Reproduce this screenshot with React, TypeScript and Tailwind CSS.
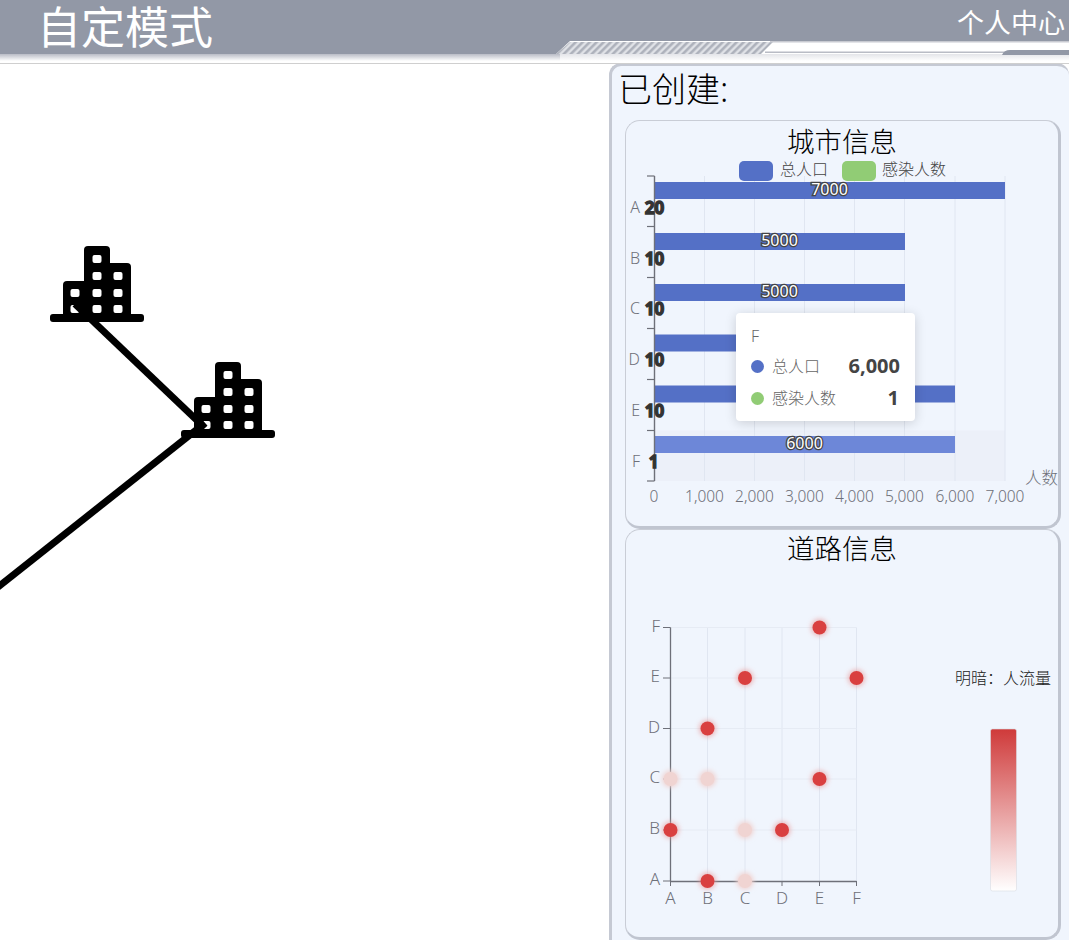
import React from "react";

const FONT = `"Noto Sans", "Noto Sans CJK SC", sans-serif`;
const GRID = [704.5, 754.5, 804.5, 854.5, 904.5, 955, 1005];
const TICKS = [176, 226.5, 277.5, 328.5, 379.5, 430.5, 481];
const BARS = [
  { name: "A", y: 182, w: 350, v: "7000", n: "20", ly: 208, show: true },
  { name: "B", y: 233, w: 250, v: "5000", n: "10", ly: 259, show: true },
  { name: "C", y: 284, w: 250, v: "5000", n: "10", ly: 309, show: true },
  { name: "D", y: 334.5, w: 250, v: "5000", n: "10", ly: 360, show: false },
  { name: "E", y: 385.5, w: 300, v: "6000", n: "10", ly: 411, show: false },
  { name: "F", y: 436, w: 300, v: "6000", n: "1", ly: 462, show: true },
];
const XLAB = ["1,000", "2,000", "3,000", "4,000", "5,000", "6,000", "7,000"];

const SX = [670.5, 707.5, 745, 782, 819.5, 856.5];
const SY = [880, 829, 778, 727.5, 677, 626.5];
const NAMES = ["A", "B", "C", "D", "E", "F"];
const POINTS: [number, number, boolean][] = [
  [4, 5, true], [2, 4, true], [5, 4, true], [1, 3, true], [4, 2, true],
  [0, 1, true], [3, 1, true], [1, 0, true],
  [0, 2, false], [1, 2, false], [2, 1, false], [2, 0, false],
];

function City({ x, y }: { x: number; y: number }) {
  const cols = [75, 97, 118];
  const wins: [number, number][] = [
    [1, 259], [1, 276], [2, 276], [0, 293], [1, 293], [2, 293], [0, 309], [1, 309], [2, 309],
  ];
  return (
    <g transform={`translate(${x} ${y})`}>
      <rect x="84" y="246" width="26" height="72" rx="4" fill="#000" />
      <rect x="100" y="263" width="31" height="55" rx="4" fill="#000" />
      <rect x="63" y="281" width="30" height="37" rx="4" fill="#000" />
      <rect x="50" y="314" width="94" height="8" rx="3" fill="#000" />
      {wins.map(([c, wy], i) => (
        <rect key={i} x={cols[c] - 4.5} y={wy - 4} width="9" height="8" rx="2" fill="#fff" />
      ))}
    </g>
  );
}

function BarChart() {
  return (
    <svg viewBox="626 158 432 368" className="block w-[432px] h-[368px] overflow-visible" fontFamily={FONT}>
      <rect x="655" y="430.5" width="350" height="50.5" fill="#ecf0f9" />
      {GRID.map((x) => (
        <line key={x} x1={x} x2={x} y1="176" y2="481" stroke="#e0e6f1" strokeWidth="1" />
      ))}
      <rect x="739" y="161" width="34" height="20" rx="5" fill="#5470c6" />
      <text x="780" y="175" fontSize="16" fontWeight="300" fill="#444">总人口</text>
      <rect x="842" y="161" width="34" height="20" rx="5" fill="#91cc75" />
      <text x="882" y="175" fontSize="16" fontWeight="300" fill="#444">感染人数</text>
      {BARS.map((b) => (
        <g key={b.name}>
          <rect x="655" y={b.y} width={b.w} height="17" fill={b.name === "F" ? "#6d87d8" : "#5470c6"} />
          {b.show && (
            <text
              x={654.5 + b.w / 2}
              y={b.y + 13}
              fontSize="16"
              textAnchor="middle"
              fill="#fff"
              stroke="#444"
              strokeWidth="2.6"
              paintOrder="stroke"
            >
              {b.v}
            </text>
          )}
          <text x="640" y={b.ly + 5} fontSize="16" fontWeight="300" textAnchor="end" fill="#6e7079">{b.name}</text>
        </g>
      ))}
      <line x1="654.5" x2="654.5" y1="176" y2="481" stroke="#6e7079" strokeWidth="1.4" />
      {TICKS.map((y) => (
        <line key={y} x1="647" x2="654.5" y1={y} y2={y} stroke="#6e7079" strokeWidth="1.2" />
      ))}
      {BARS.map((b) => (
        <text
          key={b.name}
          x={b.name === "F" ? 653.5 : 654.5}
          y={b.ly + 6}
          fontSize="17"
          fontWeight="700"
          textAnchor="middle"
          fill="#333"
          stroke="#333"
          strokeWidth="1.3"
        >
          {b.n}
        </text>
      ))}
      <text x="654" y="502" fontSize="15.5" fontWeight="300" textAnchor="middle" fill="#6e7079">0</text>
      {XLAB.map((t, i) => (
        <text key={t} x={GRID[i]} y="502" fontSize="15.5" fontWeight="300" textAnchor="middle" fill="#6e7079">{t}</text>
      ))}
      <text x="1025" y="484" fontSize="16.5" fontWeight="300" fill="#6e7079">人数</text>
    </svg>
  );
}

function Tooltip() {
  return (
    <div className="absolute left-[110px] top-[192px] w-[179px] h-[108px] rounded bg-white shadow-[0_2px_12px_rgba(0,0,0,0.16)] px-[15px] pt-[12px] text-[16px] font-light text-[#666]">
      <div className="leading-[22px]">F</div>
      <div className="flex items-center mt-[8px] h-[22px]">
        <span className="w-[13px] h-[13px] rounded-full bg-[#5470c6] mr-[8px]" />
        <span>总人口</span>
        <span className="ml-auto text-[#444] font-bold text-[20px]">6,000</span>
      </div>
      <div className="flex items-center mt-[10px] h-[22px]">
        <span className="w-[13px] h-[13px] rounded-full bg-[#91cc75] mr-[8px]" />
        <span>感染人数</span>
        <span className="ml-auto mr-px text-[#444] font-bold text-[20px]">1</span>
      </div>
    </div>
  );
}

function Scatter() {
  return (
    <svg viewBox="626 566 432 368" className="block w-[432px] h-[368px] overflow-visible" fontFamily={FONT}>
      <defs>
        <filter id="glow" x="-100%" y="-100%" width="300%" height="300%">
          <feGaussianBlur stdDeviation="2.5" />
        </filter>
        <linearGradient id="vm" x1="0" y1="0" x2="0" y2="1">
          <stop offset="0" stopColor="#cf3a3a" />
          <stop offset="1" stopColor="#ffffff" />
        </linearGradient>
      </defs>
      {SX.slice(1).map((x) => (
        <line key={x} x1={x} x2={x} y1="626.5" y2="880" stroke="#e0e6f1" />
      ))}
      {SY.slice(1).map((y) => (
        <line key={y} x1="671" x2="856.5" y1={y} y2={y} stroke="#e6ebf4" />
      ))}
      <line x1="670.5" x2="670.5" y1="626.5" y2="880" stroke="#6e7079" strokeWidth="1.3" />
      <line x1="670.5" x2="856.5" y1="880.5" y2="880.5" stroke="#6e7079" strokeWidth="1.3" />
      {SY.map((y, i) => (
        <g key={y}>
          <line x1="663" x2="670.5" y1={y} y2={y} stroke="#6e7079" />
          <text x="660" y={y + 4} fontSize="17" fontWeight="300" textAnchor="end" fill="#6e7079">{NAMES[i]}</text>
        </g>
      ))}
      {SX.map((x, i) => (
        <g key={x}>
          <line x1={x} x2={x} y1="880" y2="885" stroke="#6e7079" />
          <text x={x} y="903" fontSize="17" fontWeight="300" textAnchor="middle" fill="#6e7079">{NAMES[i]}</text>
        </g>
      ))}
      {POINTS.map(([c, r, on], i) => (
        <g key={i}>
          <circle
            cx={SX[c]}
            cy={SY[r]}
            r="8.5"
            fill={on ? "#e89a9a" : "#f0d2d0"}
            opacity={on ? 0.7 : 1}
            filter="url(#glow)"
          />
          <circle cx={SX[c]} cy={SY[r]} r="7" fill={on ? "#d94040" : "#f0d4d2"} />
        </g>
      ))}
      <text x="955" y="683" fontSize="16" fontWeight="300" fill="#222">明暗：人流量</text>
      <rect x="990.5" y="728" width="26" height="162" rx="2" fill="url(#vm)" stroke="#d9dce3" strokeWidth="0.6" />
    </svg>
  );
}

export default function App() {
  return (
    <div className="w-[1069px] h-[940px] overflow-hidden bg-white flex flex-col" style={{ fontFamily: FONT }}>
      <header className="relative h-[64px] shrink-0 border-b border-[#cfcfcf] bg-white">
        <svg viewBox="0 0 1069 63" className="absolute inset-0 w-[1069px] h-[63px]">
          <defs>
            <linearGradient id="fade" x1="0" y1="0" x2="0" y2="1">
              <stop offset="0" stopColor="#b9bcc6" />
              <stop offset="1" stopColor="#ffffff" />
            </linearGradient>
            <linearGradient id="fade2" x1="0" y1="0" x2="0" y2="1">
              <stop offset="0" stopColor="#e4e5e9" />
              <stop offset="1" stopColor="#ffffff" />
            </linearGradient>
            <pattern id="hatch" width="7" height="12" patternUnits="userSpaceOnUse" patternTransform="skewX(-45)">
              <rect width="7" height="12" fill="#dfe1e6" />
              <rect width="3.6" height="12" fill="#aeb2bc" />
            </pattern>
          </defs>
          <rect x="0" y="0" width="1069" height="41" fill="#9298a6" />
          <polygon points="0,41 570,41 556,54 0,54" fill="#9298a6" />
          <rect x="0" y="54" width="560" height="7" fill="url(#fade)" />
          <rect x="560" y="54" width="509" height="7" fill="url(#fade2)" />
          <polygon points="570,42 773,42 761,54 556,54" fill="url(#hatch)" />
          <rect x="770" y="41" width="299" height="1.5" fill="#c8cad1" />
          <rect x="765" y="51.5" width="304" height="1.5" fill="#b9bcc5" />
          <path d="M1002 55 Q1004 50 1010 50 L1069 50 L1069 55 Z" fill="#9298a6" />
        </svg>
        <h1 className="absolute left-[37px] top-0 whitespace-nowrap text-[44px] leading-[54px] font-normal text-white">自定模式</h1>
        <div className="absolute right-[4px] top-[3px] text-[27px] leading-[40px] font-normal text-white">个人中心</div>
      </header>
      <main className="flex flex-1 min-h-0">
        <section className="w-[609px] shrink-0 relative">
          <svg viewBox="0 64 609 876" className="absolute inset-0 w-[609px] h-[876px]">
            <City x={0} y={0} />
            <City x={131} y={116} />
            <line x1="75" y1="304" x2="205" y2="428" stroke="#000" strokeWidth="7" />
            <line x1="205" y1="423" x2="-2" y2="587" stroke="#000" strokeWidth="7" />
          </svg>
        </section>
        <aside className="w-[460px] shrink-0 -mt-px bg-[#f0f5fd] rounded-tl-[12px] rounded-tr-[12px] border-l-[3px] border-t-[3px] border-[#c5c9d3] pl-[13px] pr-[8px] h-[890px]">
          <div className="-ml-[7px] h-[54px] text-[34px] leading-[46px] font-light text-black">已创建:</div>
          <div className="relative w-[436px] h-[409px] rounded-[15px] border border-[#c9cdd6] border-r-[3px] border-b-[3px] border-r-[#c0c5d0] border-b-[#c0c5d0]">
            <div className="h-[37px] text-center text-[27.5px] leading-[41px] font-light text-black">城市信息</div>
            <BarChart />
            <Tooltip />
          </div>
          <div className="w-[436px] h-[411px] rounded-[15px] border border-[#c9cdd6] border-r-[3px] border-b-[3px] border-r-[#c0c5d0] border-b-[#c0c5d0]">
            <div className="h-[37px] text-center text-[27.5px] leading-[38px] font-light text-black">道路信息</div>
            <Scatter />
          </div>
        </aside>
      </main>
    </div>
  );
}
